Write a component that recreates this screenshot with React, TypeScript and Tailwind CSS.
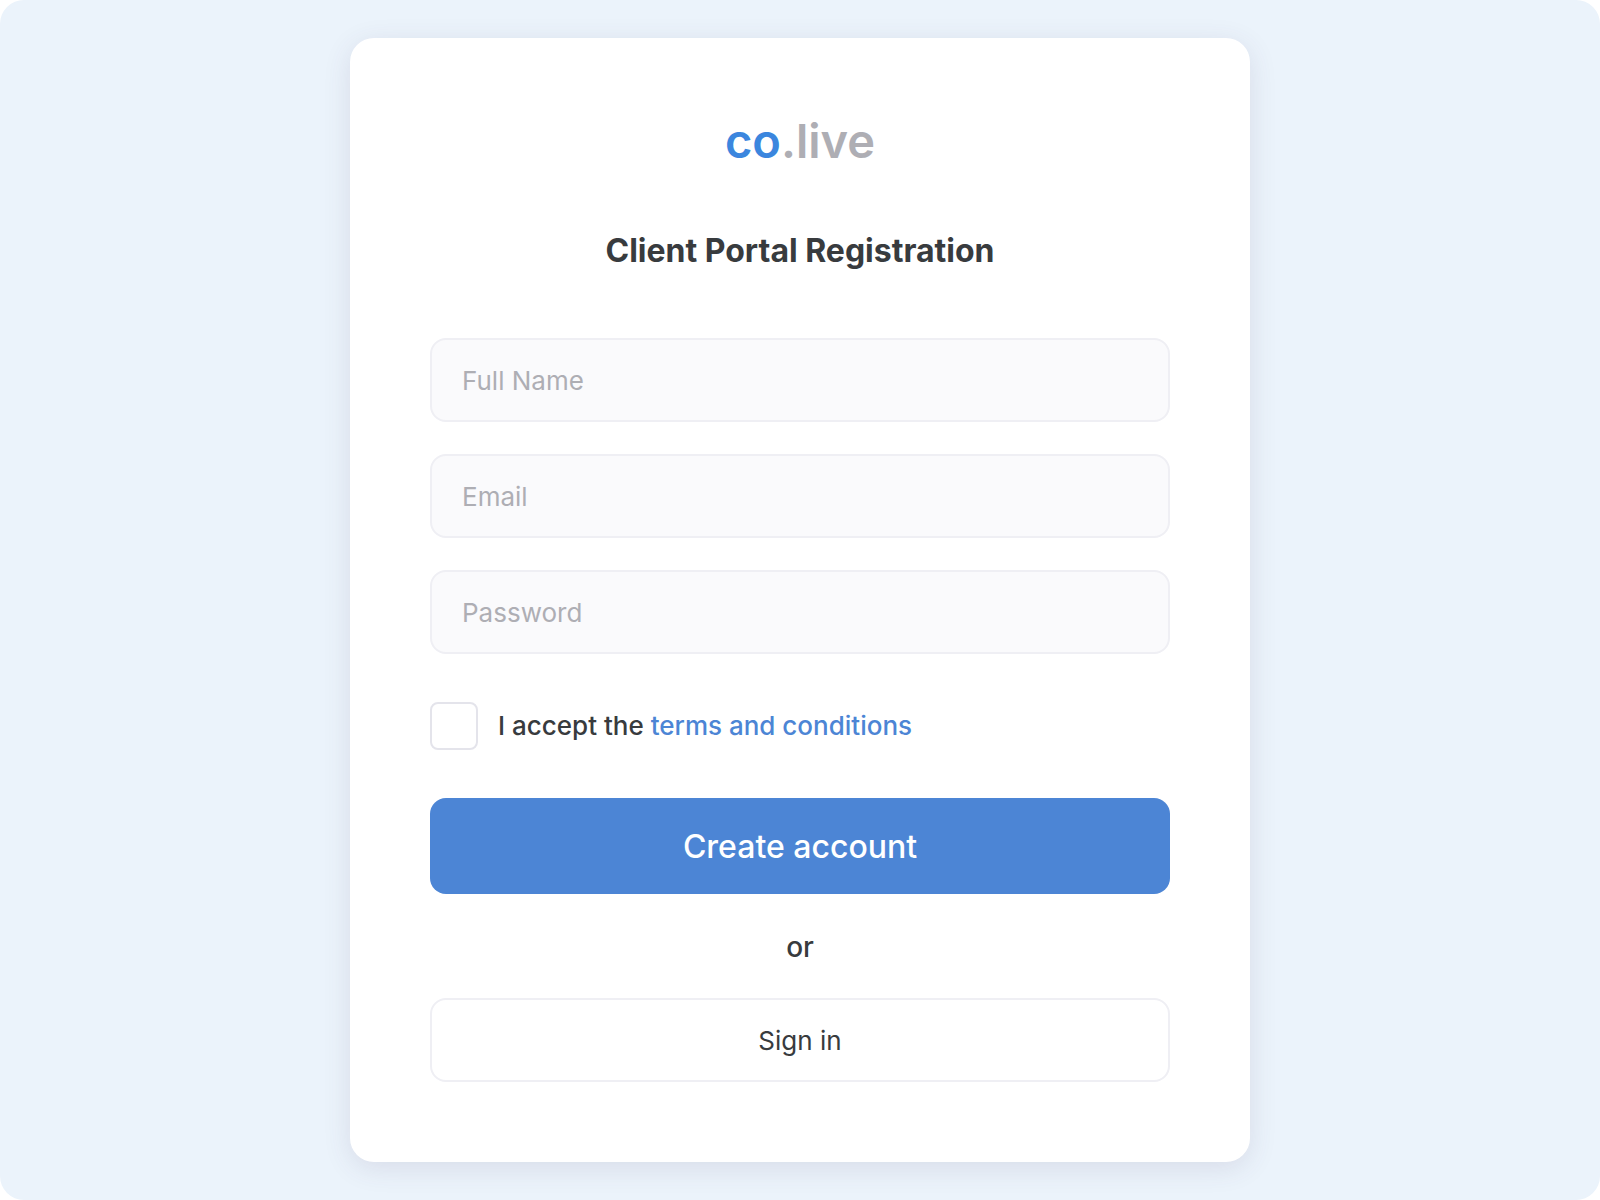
import React, { useState } from "react";

type Field = {
  id: string;
  label: string;
  type: string;
};

const fields: Field[] = [
  { id: "name", label: "Full Name", type: "text" },
  { id: "email", label: "Email", type: "email" },
  { id: "password", label: "Password", type: "password" },
];

export default function App() {
  const [accepted, setAccepted] = useState(false);

  return (
    <div className="bg-white">
      <div className="min-h-screen flex items-center justify-center rounded-3xl bg-[#ebf3fb] font-['Inter',sans-serif] text-[#383b3e]">
        <main className="w-full max-w-[900px] px-20 py-20 rounded-3xl bg-white shadow-[0_6px_28px_rgba(70,60,100,0.12)]">
          <div className="text-center text-[47px] leading-[46px] font-semibold text-[#aeaeb4]">
            <span className="text-[#3b86de]">co</span>.live
          </div>
          <h1 className="mt-[66px] text-center text-[32px] leading-[42px] font-bold">
            Client Portal Registration
          </h1>

          <form className="mt-[66px]" onSubmit={(e) => e.preventDefault()}>
            <div className="flex flex-col gap-8">
              {fields.map((field) => (
                <input
                  key={field.id}
                  id={field.id}
                  type={field.type}
                  aria-label={field.label}
                  placeholder={field.label}
                  className="w-full h-21 px-[30px] rounded-2xl border-2 border-[#efeff4] bg-[#fafafc] text-[26px] placeholder:text-[#aeaeb4] outline-none focus:border-[#4c85d5]"
                />
              ))}
            </div>

            <div className="mt-12 flex items-center gap-5 text-[26px] leading-8 font-medium">
              <input
                id="terms"
                type="checkbox"
                checked={accepted}
                onChange={(e) => setAccepted(e.target.checked)}
                className="appearance-none size-12 shrink-0 rounded-lg border-2 border-[#e4e4eb] bg-white checked:bg-[#4c85d5]"
              />
              <label htmlFor="terms">
                I accept the{" "}
                <a href="#terms" className="text-[#4c85d5]">
                  terms and conditions
                </a>
              </label>
            </div>

            <button
              type="submit"
              className="mt-12 w-full h-24 pt-0.5 rounded-2xl bg-[#4c85d5] text-[32px] font-medium text-white"
            >
              Create account
            </button>
            <p className="mt-9 mb-[34px] text-center text-[28px] leading-[34px] font-medium">
              or
            </p>
            <button
              type="button"
              className="w-full h-21 rounded-2xl border-2 border-[#efeff4] bg-white text-[26px]"
            >
              Sign in
            </button>
          </form>
        </main>
      </div>
    </div>
  );
}
